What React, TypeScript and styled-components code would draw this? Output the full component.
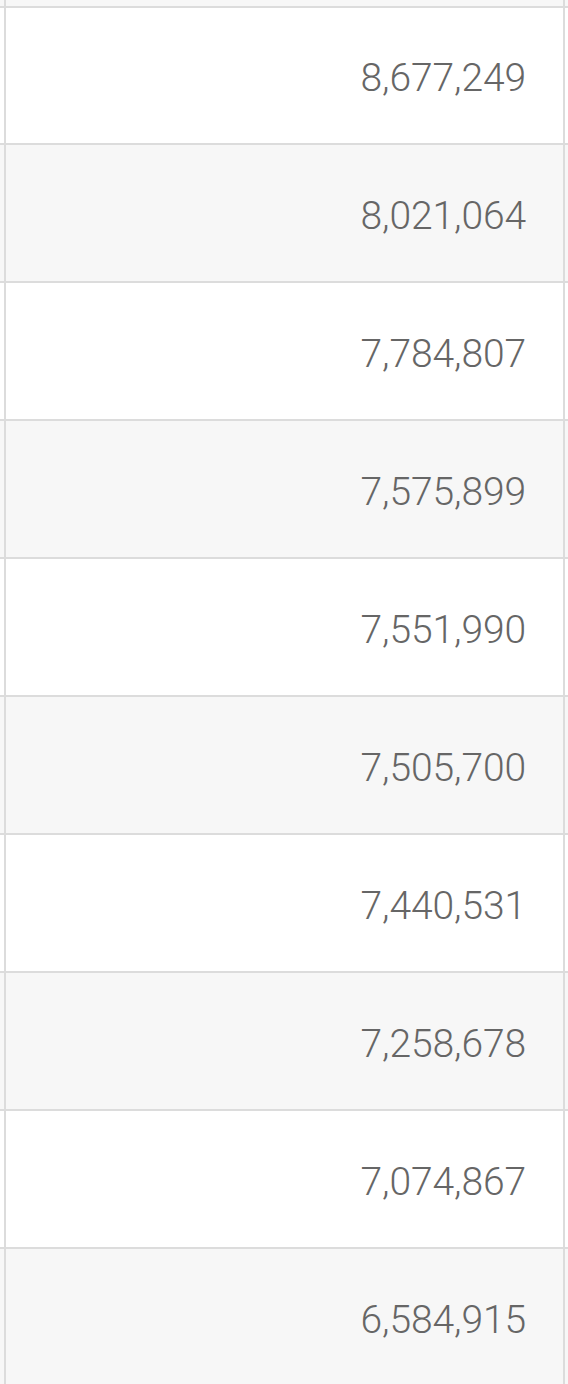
import React, { ReactElement } from 'react'
import styled, { createGlobalStyle } from 'styled-components'

const values = [
    '8,677,249',
    '8,021,064',
    '7,784,807',
    '7,575,899',
    '7,551,990',
    '7,505,700',
    '7,440,531',
    '7,258,678',
    '7,074,867',
    '6,584,915',
]

const App = () : ReactElement => {
    return <>
        <GlobalStyle />
        <Viewport>
            {/* bottom of the row above, cut off by the scroll */}
            <Row $striped $stub>
                <Edge />
                <Cell />
                <Tail />
            </Row>
            {
                values.map((value, i) => <Row key = { value } $striped = { i % 2 === 1 }>
                    <Edge />
                    <Cell>{ value }</Cell>
                    <Tail />
                </Row>)
            }
        </Viewport>
    </>
}

const GlobalStyle = createGlobalStyle`
    body {
        margin: 0;
        background: #ffffff;
        font-family: Roboto, "Noto Sans", sans-serif;
    }
`

const Viewport = styled.div`
    width: 568px;
    height: 1384px;
    overflow: hidden;
`

const Row = styled.div<{ $striped?: boolean, $stub?: boolean }>`
    display: grid;
    grid-template-columns: 6px 559px 3px;
    height: ${p => p.$stub ? '7px' : '138px'};
    background: ${p => p.$striped ? '#f7f7f7' : '#ffffff'};
`

const Edge = styled.div`
    box-sizing: border-box;
    border-right: 2px solid #dcdcdc;
    border-bottom: 2px solid #dcdcdc;
`

const Cell = styled.div`
    box-sizing: border-box;
    display: flex;
    align-items: center;
    justify-content: flex-end;
    padding: 6px 37px 0 0;
    border-right: 2px solid #dcdcdc;
    border-bottom: 2px solid #dcdcdc;
    font-family: Roboto, "Noto Sans", sans-serif;
    font-weight: 300;
    font-size: 39px;
    letter-spacing: -0.1px;
    color: #666666;
`

const Tail = styled.div`
    box-sizing: border-box;
    border-bottom: 2px solid #dcdcdc;
`

export default App
